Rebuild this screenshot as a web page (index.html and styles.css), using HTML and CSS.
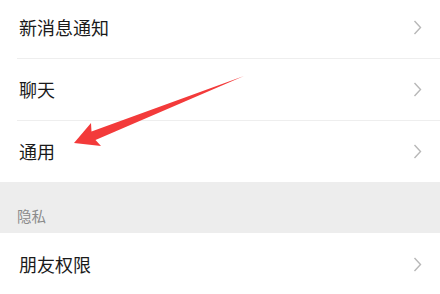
FILE: index.html
```html
<!DOCTYPE html>
<html lang="zh-CN">
<head>
    <meta charset="UTF-8">
    <meta name="viewport" content="width=device-width, initial-scale=1.0">
    <title>设置</title>
    <link rel="stylesheet" href="styles.css">
</head>
<body>
    <div class="page">
        <ul class="settings-list">
            <li class="settings-item">
                <span class="item-label">新消息通知</span>
                <svg class="chevron" width="9" height="15" viewBox="0 0 9 15"><polyline points="1.5,1 7.5,7.5 1.5,14" /></svg>
            </li>
            <li class="settings-item">
                <span class="item-label">聊天</span>
                <svg class="chevron" width="9" height="15" viewBox="0 0 9 15"><polyline points="1.5,1 7.5,7.5 1.5,14" /></svg>
            </li>
            <li class="settings-item">
                <span class="item-label">通用</span>
                <svg class="chevron" width="9" height="15" viewBox="0 0 9 15"><polyline points="1.5,1 7.5,7.5 1.5,14" /></svg>
            </li>
        </ul>

        <div class="section-title">隐私</div>

        <ul class="settings-list">
            <li class="settings-item">
                <span class="item-label">朋友权限</span>
                <svg class="chevron" width="9" height="15" viewBox="0 0 9 15"><polyline points="1.5,1 7.5,7.5 1.5,14" /></svg>
            </li>
        </ul>

        <!-- annotation arrow pointing at 通用 -->
        <svg class="annotation" width="440" height="294" viewBox="0 0 440 294">
            <polygon points="74,143 91,123 91.5,131.5 244,76 95.5,140 101,146" />
        </svg>
    </div>
</body>
</html>
```

FILE: styles.css
```css
* {
    margin: 0;
    padding: 0;
    box-sizing: border-box;
}

body {
    font-family: "Noto Sans CJK SC", "Noto Sans", sans-serif;
    background-color: #fff;
    color: #1a1a1a;
    overflow: hidden;
}

.page {
    position: relative;
    width: 440px;
    height: 294px;
    overflow: hidden;
}

.settings-list {
    list-style: none;
    background-color: #fff;
}

.settings-list:first-child {
    margin-top: -4px;
}

.settings-item {
    display: flex;
    align-items: center;
    justify-content: space-between;
    height: 62px;
    padding: 0 18px 0 19px;
    position: relative;
}

.settings-item + .settings-item::before {
    content: "";
    position: absolute;
    top: 0;
    left: 17px;
    right: 0;
    height: 1px;
    background-color: #eeeeee;
}

.item-label {
    font-size: 18px;
    line-height: 1;
}

.chevron polyline {
    fill: none;
    stroke: #b8b8b8;
    stroke-width: 1.4;
}

.section-title {
    height: 51px;
    background-color: #ededed;
    color: #8a8a8a;
    font-size: 14.5px;
    padding: 27px 0 0 17px;
    line-height: 1;
}

.annotation {
    position: absolute;
    top: 0;
    left: 0;
    pointer-events: none;
}

.annotation polygon {
    fill: #f33a3a;
}
```
